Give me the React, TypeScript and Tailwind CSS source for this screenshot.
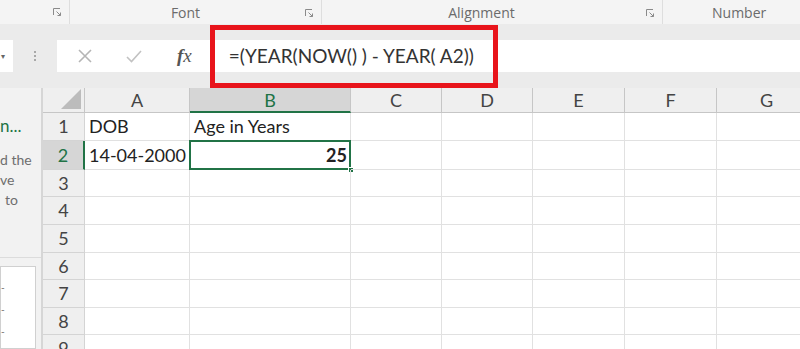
import React from "react";

const columns = ["A", "B", "C", "D", "E", "F", "G"];
const rowHeights = [28, 29, 27, 28, 28, 27, 28, 27, 28];

function Launcher() {
  return (
    <svg width="9" height="8" viewBox="0 0 9 8" className="text-[#8a8a8a]">
      <path d="M0.5 7V0.5H7" fill="none" stroke="currentColor" strokeWidth="1" />
      <path d="M3.5 3.5L7.5 7.5M7.5 4.5V7.5H4.5" fill="none" stroke="currentColor" strokeWidth="1" />
    </svg>
  );
}

function Ribbon() {
  return (
    <div className="flex h-[24px] bg-[#f4f4f4] text-[14px] text-[#6b6b6b]">
      <div className="flex w-[70px] items-center justify-end border-r border-[#dedede] pr-[7px]">
        <Launcher />
      </div>
      <div className="relative flex w-[252px] items-center justify-center border-r border-[#dedede]">
        <span className="ml-[-20px]">Font</span>
        <span className="absolute right-[7px] top-[9px]">
          <Launcher />
        </span>
      </div>
      <div className="relative flex w-[341px] items-center justify-center border-r border-[#dedede]">
        <span className="ml-[-21px]">Alignment</span>
        <span className="absolute right-[7px] top-[9px]">
          <Launcher />
        </span>
      </div>
      <div className="flex flex-1 items-center pl-[49px]">Number</div>
    </div>
  );
}

function FormulaBar() {
  return (
    <div className="relative h-[64px] bg-[#ebebeb] pt-[16px]">
      <div className="flex h-[32px]">
        <div className="flex w-[13px] items-center bg-white pl-[1px] text-[8px] text-[#666]">▾</div>
        <div className="flex w-[44px] flex-col items-center justify-center gap-[2px]">
          <span className="h-[2px] w-[2px] bg-[#a8a8a8]" />
          <span className="h-[2px] w-[2px] bg-[#a8a8a8]" />
          <span className="h-[2px] w-[2px] bg-[#a8a8a8]" />
        </div>
        <div className="flex flex-1 items-center bg-white">
          <svg width="14" height="14" viewBox="0 0 14 14" className="ml-[21px]">
            <path d="M1 1L13 13M13 1L1 13" stroke="#b5b5b5" strokeWidth="1.6" />
          </svg>
          <svg width="16" height="13" viewBox="0 0 16 13" className="ml-[34px]">
            <path d="M1 7L5.5 11.5L15 1" fill="none" stroke="#c2c2c2" strokeWidth="1.6" />
          </svg>
          <span className="ml-[35px] font-['Liberation_Serif'] text-[19px] italic text-[#555]">
            <span className="font-bold">f</span>x
          </span>
          <span className="ml-[37px] font-['Lato'] text-[19px] text-[#333]">=(YEAR(NOW() ) - YEAR( A2))</span>
        </div>
      </div>
      <div className="absolute left-[210px] top-[1px] h-[63px] w-[288px] border-[5px] border-[#e8141b]" />
    </div>
  );
}

function SidePane() {
  return (
    <div className="flex w-[43px] flex-col border-r-2 border-[#d6d6d6] bg-[#f2f2f2] font-['Lato']">
      <div className="mt-[25px] text-[17px] text-[#217346]">n...</div>
      <div className="mt-[11px] text-[14px] leading-[20px] text-[#6e6e6e]">
        <div>d the</div>
        <div>ve</div>
        <div className="pl-[5px]">to</div>
      </div>
      <div className="mt-[47px] border-t border-[#dcdcdc]" />
      <div className="mt-[8px] flex w-[36px] flex-1 flex-col items-start gap-[8px] border border-[#d0d0d0] bg-white pt-[13px] text-[10px] leading-[14px] text-[#666]">
        <span>‐</span>
        <span>‐</span>
        <span>-</span>
      </div>
    </div>
  );
}

function Sheet() {
  return (
    <div className="grid flex-1 grid-cols-[42px_105px_161px_91px_91px_92px_92px_100px] content-start overflow-hidden bg-white font-['Lato'] text-[18px]">
      <div className="relative h-[25px] border-b border-r border-[#c6c6c6] bg-[#efefef]">
        <div className="absolute bottom-[3px] right-[3px] h-0 w-0 border-b-[20px] border-l-[20px] border-b-[#bcbcbc] border-l-transparent" />
      </div>
      {columns.map((c) => (
        <div
          key={c}
          className={
            c === "B"
              ? "flex h-[25px] items-center justify-center border-b-2 border-r border-b-[#217346] border-r-[#c6c6c6] bg-[#d6d6d6] pt-[1px] text-[#217346]"
              : "flex h-[25px] items-center justify-center border-b border-r border-[#c6c6c6] bg-[#efefef] text-[#444]"
          }
        >
          {c}
        </div>
      ))}

      {rowHeights.map((h, i) => {
        const row = i + 1;
        return (
          <React.Fragment key={row}>
            <div
              style={{ height: h }}
              className={
                row === 2
                  ? "flex items-center justify-center border-b border-r-2 border-b-[#d4d4d4] border-r-[#217346] bg-[#d6d6d6] text-[#217346]"
                  : "flex items-center justify-center border-b border-r border-[#d4d4d4] bg-[#efefef] text-[#444]"
              }
            >
              {row}
            </div>
            {columns.map((c) => {
              let text = "";
              if (row === 1 && c === "A") text = "DOB";
              if (row === 1 && c === "B") text = "Age in Years";
              if (row === 2 && c === "A") text = "14-04-2000";
              const selected = row === 2 && c === "B";
              return (
                <div
                  key={c}
                  style={{ height: h }}
                  className="relative flex items-center whitespace-nowrap border-b border-r border-[#e1e1e1] pl-[4px] text-[#222]"
                >
                  {text}
                  {selected && (
                    <>
                      <span className="ml-auto pr-[3px] font-bold">25</span>
                      <div className="absolute -left-[1px] -top-[1px] bottom-[-1px] right-[-1px] border-2 border-[#217346]" />
                      <div className="absolute bottom-[-4px] right-[-4px] h-[6px] w-[6px] border border-white bg-[#217346]" />
                    </>
                  )}
                </div>
              );
            })}
          </React.Fragment>
        );
      })}
    </div>
  );
}

export default function App() {
  return (
    <div className="flex h-[349px] w-[800px] flex-col overflow-hidden bg-[#ebebeb] font-['Open_Sans']">
      <Ribbon />
      <FormulaBar />
      <div className="flex flex-1 overflow-hidden">
        <SidePane />
        <Sheet />
      </div>
    </div>
  );
}
